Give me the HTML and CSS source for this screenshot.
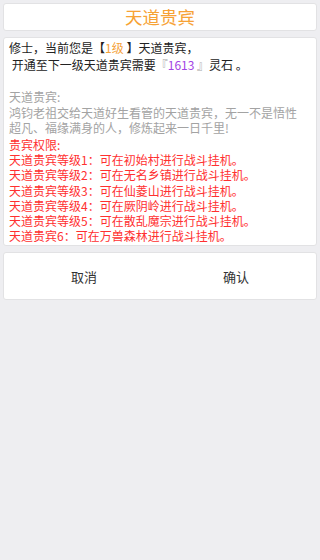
FILE: index.html
```html
<!DOCTYPE html>
<html lang="zh">
<head>
<meta charset="utf-8">
<link rel="stylesheet" href="styles.css">
</head>
<body>
<div class="page">
  <div class="title box">天道贵宾</div>
  <div class="content box">
    <div class="intro">
      <div>修士，当前您是【<span class="orange">1级</span> 】天道贵宾，</div>
      <div>&nbsp;开通至下一级天道贵宾需要<span class="grey-mark">『</span><span class="purple">1613</span> <span class="grey-mark">』</span>灵石 。</div>
    </div>
    <div class="desc">
      <div>天道贵宾:</div>
      <div>鸿钧老祖交给天道好生看管的天道贵宾，无一不是悟性超凡、福缘满身的人，修炼起来一日千里!</div>
    </div>
    <div class="perks">
      <div>贵宾权限:</div>
      <div>天道贵宾等级1：可在初始村进行战斗挂机。</div>
      <div>天道贵宾等级2：可在无名乡镇进行战斗挂机。</div>
      <div>天道贵宾等级3：可在仙菱山进行战斗挂机。</div>
      <div>天道贵宾等级4：可在厥阴岭进行战斗挂机。</div>
      <div>天道贵宾等级5：可在散乱魔宗进行战斗挂机。</div>
      <div>天道贵宾6：可在万兽森林进行战斗挂机。</div>
    </div>
  </div>
  <div class="actions box">
    <div class="btn">取消</div>
    <div class="btn">确认</div>
  </div>
</div>
</body>
</html>
```
FILE: styles.css
```css
html, body {
  margin: 0;
  padding: 0;
  background: #eeeef1;
  font-family: "Noto Sans CJK SC", "Noto Sans", sans-serif;
}
.page {
  padding: 3px 3px;
  display: flex;
  flex-direction: column;
}
.box {
  background: #ffffff;
  border: 1px solid #e2e2e4;
  border-radius: 3px;
  box-sizing: border-box;
}
.title {
  height: 28px;
  line-height: 26px;
  text-align: center;
  font-size: 17.5px;
  color: #f7a235;
}
.content {
  margin-top: 6px;
  padding: 2px 10px 2px 5px;
  font-size: 12px;
}
.intro {
  line-height: 16.5px;
  color: #222222;
}
.orange { color: #f5a23a; }
.purple { color: #a444e4; }
.grey-mark { color: #a8a8a8; }
.desc {
  margin-top: 16px;
  line-height: 15.5px;
  color: #a3a3a3;
}
.perks {
  margin-top: 1.5px;
  line-height: 15.2px;
  color: #ff3030;
}
.actions {
  margin-top: 6px;
  height: 48px;
  display: flex;
  padding: 0 4px;
  align-items: center;
}
.btn {
  flex: 1;
  text-align: center;
  font-size: 13px;
  color: #333333;
}
```
